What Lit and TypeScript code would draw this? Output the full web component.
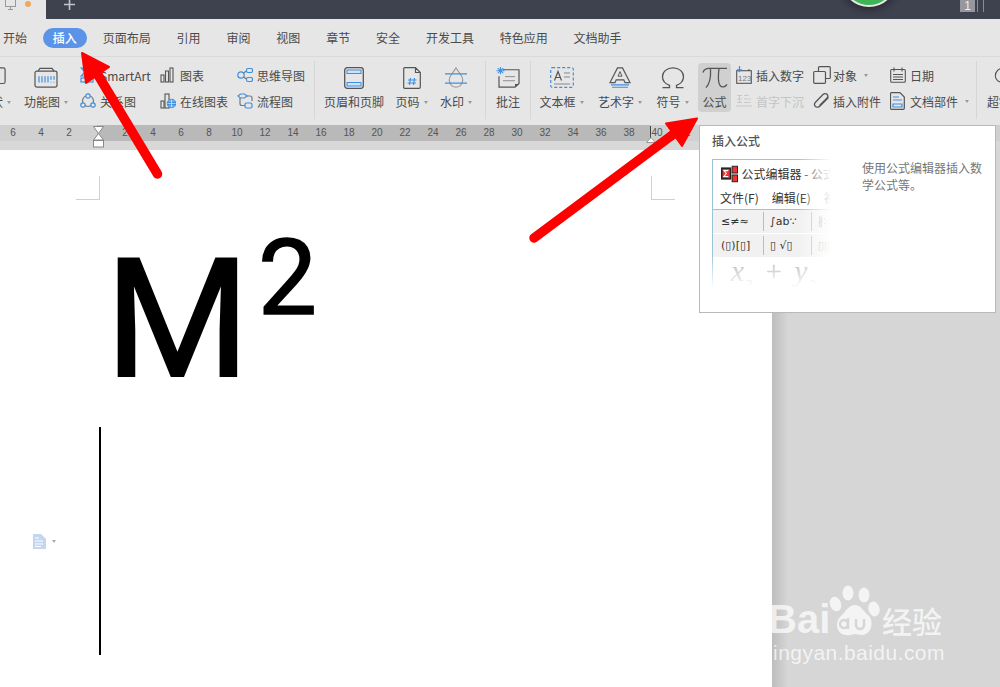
import { LitElement, html, css } from "lit";
import { customElement } from "lit/decorators.js";

const B = "#3f8fe0";
const D = "#555";

const I = {
  shape: html`<svg width="24" height="24" viewBox="0 0 24 24" fill="none"><rect x="3" y="1" width="20" height="17" rx="2" stroke="${D}" stroke-width="1.3"/></svg>`,
  func: html`<svg width="24" height="24" viewBox="0 0 24 24" preserveAspectRatio="none" fill="none" stroke="${D}" stroke-width="1.2"><path d="M4 4.5 6 1.5H18L20 4.5"/><rect x="1" y="4.5" width="22" height="17.5" rx="2"/><path d="M5 10v7M8 10v7M11 10v7M14 10v7M17 10v4M20 10v4" stroke="${B}"/><path d="M17 16v1M20 16v1" stroke="${B}"/></svg>`,
  smart: html`<svg width="16" height="16" viewBox="0 0 16 16" fill="none" stroke="${B}" stroke-width="1.2"><path d="M1 1h6l4 4-4 4H1l4-4z"/><rect x="1" y="11" width="12" height="4"/></svg>`,
  rel: html`<svg width="16" height="16" viewBox="0 0 16 16" fill="none" stroke="${B}" stroke-width="1.2"><circle cx="8" cy="8" r="5.5" stroke="#777"/><circle cx="8" cy="3" r="2.2" fill="#e6e6e6"/><circle cx="3" cy="12" r="2.2" fill="#e6e6e6"/><circle cx="13" cy="12" r="2.2" fill="#e6e6e6"/></svg>`,
  chart: html`<svg width="14" height="16" viewBox="0 0 14 16" fill="none" stroke="${D}" stroke-width="1.1"><rect x="1" y="8" width="3" height="7"/><rect x="5.5" y="4" width="3" height="11"/><rect x="10" y="1" width="3" height="14"/></svg>`,
  online: html`<svg width="16" height="16" viewBox="0 0 16 16" fill="none" stroke="${D}" stroke-width="1.1"><rect x="1" y="8" width="3" height="7"/><rect x="5" y="1" width="4" height="14"/><circle cx="11.5" cy="10.5" r="4.2" fill="${B}" stroke="${B}"/><path d="M7.5 10.5h8M11.5 6.5v8M8.5 8h6M8.5 13h6" stroke="#e6e6e6" stroke-width=".7"/></svg>`,
  mind: html`<svg width="16" height="16" viewBox="0 0 16 16" fill="none" stroke="${B}" stroke-width="1.2"><circle cx="4" cy="8" r="3.2"/><rect x="9.5" y="1.5" width="6" height="4" rx="1.5"/><rect x="9.5" y="10.5" width="6" height="4" rx="1.5"/><path d="M6.5 6 9.5 4M6.5 10l3 2" stroke="#777"/></svg>`,
  flow: html`<svg width="16" height="16" viewBox="0 0 16 16" fill="none" stroke="${B}" stroke-width="1.2"><path d="M1 3l2.5-2h4L10 3 7.5 5h-4z"/><rect x="8" y="10" width="7" height="5" rx="1.5"/><path d="M3 5v5.500q0 2 2 2h3M10 3h3q2 0 2 2v3" stroke="#777"/></svg>`,
  header: html`<svg width="20" height="22" viewBox="0 0 20 22" fill="none"><rect x=".7" y=".7" width="18.6" height="20.6" rx="2.5" stroke="${D}" stroke-width="1.3"/><rect x="3" y="3" width="14" height="3.5" fill="#cfe1f5" stroke="${B}"/><rect x="3" y="15.5" width="14" height="3.5" fill="#cfe1f5" stroke="${B}"/></svg>`,
  page: html`<svg width="18" height="22" viewBox="0 0 18 22" fill="none"><path d="M1.7.7H12.500L17.300 5.500V20a1.300 1.300 0 0 1-1.300 1.300H1.700A1 1 0 0 1 .7 20V1.700A1 1 0 0 1 1.700.7ZM12.500.7V5.500H17.300" stroke="${D}" stroke-width="1.2"/><path d="M7.500 11 6.500 18M11.500 11l-1 7M5 13h8.500M4.500 16h8.500" stroke="${B}" stroke-width="1.2"/></svg>`,
  water: html`<svg width="24" height="24" viewBox="0 0 24 24" preserveAspectRatio="none" fill="none"><path d="M12 1 17 9C20.500 14 18 22 12 22S3.500 14 7 9Z" stroke="#999" stroke-width="1.2"/><path d="M1 7.500h22M1 17.500h22" stroke="${B}" stroke-width="1.3"/></svg>`,
  note: html`<svg width="24" height="24" viewBox="0 0 24 24" preserveAspectRatio="none" fill="none"><path d="M7 3H23V18L19 22H3V10" stroke="${D}" stroke-width="1.2"/><path d="M9 10.500h10M7 15h12" stroke="#888"/><path d="M19 22V18.500H23Z" fill="${D}"/><path d="M4.500 0v8M.5 4h8M1.700 1.200l5.600 5.600M7.300 1.200 1.700 6.800" stroke="${B}" stroke-width="1.1"/></svg>`,
  tbox: html`<svg width="24" height="22" viewBox="0 0 24 22" fill="none"><rect x=".7" y=".7" width="22.6" height="19.6" rx="1.5" stroke="${B}" stroke-width="1.2" stroke-dasharray="3 2"/><path d="M4.500 13.500 8 4.500 11.500 13.500M5.800 10.500h4.500" stroke="${D}" stroke-width="1.2"/><path d="M14 6h6M14 10h6M4 17h16" stroke="#888"/></svg>`,
  art: html`<svg width="22" height="24" viewBox="0 0 22 24" preserveAspectRatio="none" fill="none"><path d="M8.500 1h5L21 17h-5l-1.200-3H7.200L6 17H1Z" stroke="${D}" stroke-width="1.2"/><path d="M9 10h4L11 5Z" stroke="${D}"/><path d="M2 19.500h18M3 22h16" stroke="${B}" stroke-width="1.1"/></svg>`,
  omega: html`<svg width="24" height="24" viewBox="0 0 24 24" preserveAspectRatio="none" fill="none"><path d="M1.500 22.500h7v-2.500C4 18 1.500 14.500 1.500 10.500 1.500 5 6 1 12 1s10.500 4 10.500 9.500c0 4-2.500 7.500-7 9.500v2.500h7" stroke="${D}" stroke-width="1.3"/></svg>`,
  pi: html`<svg width="26" height="24" viewBox="0 0 26 24" preserveAspectRatio="none" fill="none"><path d="M1 6C2 2.500 4 1.500 7 1.500H25M8.500 1.500C9 10 8 18 4 22.500M17 1.500C16 10 16 17 18 20c1.500 2.500 5 2.500 7-1" stroke="${D}" stroke-width="1.3"/></svg>`,
  num: html`<svg width="16" height="18" viewBox="0 0 16 18" fill="none"><rect x=".7" y="4.7" width="14.6" height="12.6" stroke="${D}" stroke-width="1.1"/><path d="M3 4.700V3M13 4.700V3" stroke="${D}"/><text x="2" y="14.500" font-size="8" fill="#777" font-family="Liberation Sans">123</text><path d="M3.500 0v5M1.500 3l2 2.500L5.500 3" stroke="${B}" stroke-width="1.2"/></svg>`,
  drop: html`<svg width="16" height="16" viewBox="0 0 16 16" fill="none" stroke="#c9c9c9"><path d="M1 2.500h5M1 6h5M1 9.500h5M3.500 2v8M8 2.500l4.500 0M8 6h7M8 9.500h7M0 13h16"/></svg>`,
  obj: html`<svg width="18" height="18" viewBox="0 0 18 18" fill="none" stroke="${D}" stroke-width="1.2"><rect x="5.500" y=".7" width="11.8" height="11.8" rx="1"/><rect x=".7" y="5.500" width="11.8" height="11.8" rx="1" fill="#e6e6e6"/></svg>`,
  clip: html`<svg width="18" height="18" viewBox="0 0 18 18" fill="none" stroke="${D}" stroke-width="1.3"><path d="M15.500 5.500 7 14c-1.500 1.500-3.700 1.500-4.700.4s-1-3 .4-4.400L10 2.500c1.200-1.200 3-1.200 4-.2s1 2.800-.2 4L6.500 13.500"/></svg>`,
  date: html`<svg width="16" height="16" viewBox="0 0 16 16" fill="none" stroke="${D}" stroke-width="1.1"><rect x=".7" y="2.5" width="14.6" height="12.8" rx="1"/><path d="M4 .5v4M12 .5v4M3 7.500h10M3 10h10M3 12.500h10"/></svg>`,
  part: html`<svg width="15" height="18" viewBox="0 0 15 18" fill="none"><path d="M1.500.7H10L14.300 5V16.300a1 1 0 0 1-1 1H1.500a1 1 0 0 1-1-1V1.700a1 1 0 0 1 1-1Z" stroke="${D}" stroke-width="1.2"/><path d="M3 5h6M3 8h9M3 12h9V15H3Z" stroke="${B}" stroke-width="1.2"/></svg>`,
  link: html`<svg width="24" height="24" viewBox="0 0 24 24" fill="none"><path d="M10 20 7 16.500C3 15 1.500 12.500 1.500 9.500 1.500 5 5 1.500 10 1.500s8.500 3.500 8.500 8" stroke="${D}" stroke-width="1.2"/></svg>`,
};

type Item =
  | { t: "l"; w: number; icon: unknown; label: string; caret?: boolean; ml?: number; hl?: boolean }
  | { t: "s"; w: number; pl: number; rows: { icon: unknown; iw: number; text: string; caret?: boolean; off?: boolean }[] }
  | { t: "sep"; ml?: number };

const ITEMS: Item[] = [
  { t: "l", w: 38, icon: I.shape, label: "形状", caret: true, ml: -24 },
  { t: "l", w: 64, icon: I.func, label: "功能图", caret: true },
  { t: "s", w: 80, pl: 2, rows: [{ icon: I.smart, iw: 20, text: "SmartArt" }, { icon: I.rel, iw: 20, text: "关系图" }] },
  { t: "s", w: 77, pl: 2, rows: [{ icon: I.chart, iw: 20, text: "图表" }, { icon: I.online, iw: 20, text: "在线图表" }] },
  { t: "s", w: 79, pl: 2, rows: [{ icon: I.mind, iw: 20, text: "思维导图" }, { icon: I.flow, iw: 20, text: "流程图" }] },
  { t: "sep" },
  { t: "l", w: 78, icon: I.header, label: "页眉和页脚" },
  { t: "l", w: 37, icon: I.page, label: "页码", caret: true },
  { t: "l", w: 52, icon: I.water, label: "水印", caret: true },
  { t: "sep", ml: 3 },
  { t: "l", w: 44, icon: I.note, label: "批注" },
  { t: "sep" },
  { t: "l", w: 61, icon: I.tbox, label: "文本框", caret: true },
  { t: "l", w: 56, icon: I.art, label: "艺术字", caret: true },
  { t: "l", w: 49, icon: I.omega, label: "符号", caret: true },
  { t: "l", w: 33, icon: I.pi, label: "公式", hl: true, ml: 1 },
  { t: "s", w: 81, pl: 5, rows: [{ icon: I.num, iw: 20, text: "插入数字" }, { icon: I.drop, iw: 20, text: "首字下沉", off: true }] },
  { t: "s", w: 78, pl: 1, rows: [{ icon: I.obj, iw: 20, text: "对象", caret: true }, { icon: I.clip, iw: 20, text: "插入附件" }] },
  { t: "s", w: 86, pl: 0, rows: [{ icon: I.date, iw: 20, text: "日期" }, { icon: I.part, iw: 20, text: "文档部件", caret: true }] },
  { t: "sep" },
];

const TABS = ["开始", "插入", "页面布局", "引用", "审阅", "视图", "章节", "安全", "开发工具", "特色应用", "文档助手"];
const MID = Array.from({ length: 19 }, (_, i) => (i + 1) * 2);

@customElement("app-root")
export class AppRoot extends LitElement {
  static styles = css`
    :host { display: block; height: 100vh; font-family: "Noto Sans CJK SC", "Noto Sans", sans-serif; font-size: 12px; color: #4a4a4a; }
    .root { position: relative; display: flex; flex-direction: column; height: 100%; overflow: hidden; background: #d6d6d6; }
    svg { display: block; }

    .title { display: flex; height: 19px; flex: none; background: #3e414e; overflow: hidden; }
    .home { width: 46px; background: #e6e6e6; display: flex; gap: 9px; padding-left: 5px; box-sizing: border-box; flex: none; }
    .monitor { margin-top: -2px; }
    .dot { width: 6px; height: 6px; border-radius: 50%; background: #f0a860; margin-top: 1px; }
    .plus { margin-left: 17px; margin-top: -1px; flex: none; }
    .ball { width: 52px; height: 52px; border-radius: 50%; background: #3fb455; border: 2px solid #e8e8e8; margin-left: 765px; margin-top: -49px; box-shadow: 0 2px 8px rgba(0,0,0,.45); flex: none; }
    .one { width: 15px; height: 12px; background: #96979e; color: #eee; margin-left: 63px; font: 12px/12px "Liberation Sans", sans-serif; text-align: center; flex: none; }
    .bars { width: 5px; height: 12px; margin-left: 2px; border-left: 1px solid #8a8b92; border-right: 1px solid #8a8b92; flex: none; }

    .tabs { display: flex; flex: none; gap: 25.85px; height: 38px; padding-left: 3px; box-sizing: border-box; background: #e6e6e6; border-bottom: 1px solid #dadada; align-items: center; line-height: 20px; padding-top: 1px; }
    .tab.on { background: #5b93e8; color: #fff; border-radius: 10px; padding: 0 10px; margin: 0 -10px; font-weight: 500; }

    .ribbon { display: flex; flex: none; height: 68px; padding-top: 5px; box-sizing: border-box; background: #e6e6e6; white-space: nowrap; }
    .large { flex: none; display: flex; flex-direction: column; align-items: center; }
    .slot { height: 26px; }
    .slot svg { margin-top: 5px; max-height: 22px; }
    .label { height: 26px; line-height: 26px; display: flex; align-items: center; gap: 3px; margin-top: 1px; }
    .caret { width: 0; height: 0; border: 2.5px solid transparent; border-top: 3px solid #999; border-bottom: 0; margin-left: 1px; }
    .hl { background: #d0d0d0; border-radius: 4px; margin-top: 1px; height: 49px; }
    .hl .slot { height: 25px; }
    .hl .slot svg { margin-top: 4px; }
    .small { flex: none; box-sizing: border-box; }
    .row { height: 26px; display: flex; align-items: center; }
    .ico { flex: none; }
    .row.off { color: #c4c4c4; }
    .row .caret { margin-left: 7px; }
    .sep { flex: none; width: 1px; height: 58px; margin-top: -1px; background: #d6d6d6; }
    .last { display: flex; flex-direction: column; padding-left: 10px; width: 60px; flex: none; }
    .last .slot svg { margin-left: 6px; }

    .ruler { position: relative; display: flex; flex: none; height: 25px; background: #d8d8d8; font: 10px/16px "Liberation Sans", sans-serif; color: #555; }
    .seg { height: 16px; display: flex; flex: none; }
    .seg span { width: 28px; text-align: center; flex: none; }
    .seg-l { width: 97px; background: #d0d0d0; justify-content: flex-end; padding-right: 14px; box-sizing: border-box; }
    .seg-m { width: 553px; background: #b9b9b9; padding-left: 14px; box-sizing: border-box; overflow: hidden; }
    .seg-r { flex: 1; background: #d0d0d0; padding-left: 0; }
    .seg-r span { margin-left: -7px; }
    .seg-r span + span { margin-left: 0; }
    .marker { position: absolute; top: 1px; left: 92px; }
    .marker-r { position: absolute; top: 1px; left: 645px; }

    .work { display: flex; flex: 1; min-height: 0; }
    .page { width: 772px; flex: none; background: #fff; }
    .side { flex: 1; background: linear-gradient(90deg, #bdbdbd, #d6d6d6 16px); }
    .marks { display: flex; justify-content: space-between; width: 599px; margin-left: 76px; padding-top: 26px; }
    .mark { width: 24px; height: 24px; box-sizing: border-box; border-bottom: 1px solid #d0d0d0; }
    .mark.a { border-right: 1px solid #d0d0d0; }
    .mark.b { border-left: 1px solid #d0d0d0; }
    .eq { margin: 36px 0 0 105px; height: 167px; font: 400 166px/167px Roboto, sans-serif; color: #000; white-space: nowrap; -webkit-text-stroke: 2px #000; }
    .eq sup { font-size: 105px; line-height: 0; vertical-align: 62px; margin-left: 8px; -webkit-text-stroke: 1.5px #000; }
    .line { display: flex; align-items: center; height: 228px; margin: 24px 0 0 33px; }
    .line .caret { margin-left: 6px; border-top-color: #aaa; }
    .bar { width: 2px; height: 228px; background: #000; margin-left: 43px; }

    .tip { position: absolute; left: 699px; top: 125px; width: 297px; height: 188px; box-sizing: border-box; background: #fff; border: 1px solid #b9b9b9; display: grid; grid-template-columns: 123px 1fr; column-gap: 27px; grid-template-rows: auto 1fr; padding: 6px 10px 0 12px; }
    .tip h4 { grid-column: 1 / 3; margin: 0 0 10px; font-size: 12px; line-height: 17px; font-weight: 500; color: #555; }
    .desc { color: #777; line-height: 17px; font-size: 12px; }
    .shot { position: relative; width: 123px; height: 132px; overflow: hidden; color: #333; white-space: nowrap; }
    .inner { height: 132px; box-sizing: border-box; border-top: 1px solid #9cc3d8; border-left: 1px solid #9cc3d8; }
    .shot::after { content: ""; position: absolute; inset: 0; background: linear-gradient(90deg, transparent 70%, #fff 97%), linear-gradient(180deg, transparent 72%, #fff 98%); }
    .st { display: flex; align-items: center; height: 27px; padding-left: 8px; gap: 3px; }
    .sm { display: flex; gap: 13px; height: 22px; line-height: 22px; padding-left: 7px; border-bottom: 1px solid #bbb; box-sizing: content-box; }
    .tb { display: flex; align-items: center; height: 23px; background: #f1f1f1; margin-bottom: 1px; font: 11px/23px "DejaVu Sans", sans-serif; padding-left: 8px; }
    .tb span { width: 42px; flex: none; border-right: 1px solid #bbb; height: 19px; line-height: 19px; overflow: hidden; }
    .tb span + span { padding-left: 6px; box-sizing: border-box; width: 48px; }
    .tb span:last-child { border: 0; color: #999; }
    .mt { font: italic 29px/26px "Liberation Serif", serif; color: #aaa; padding-left: 18px; letter-spacing: 2px; }
    .mt sub { font-size: 13px; line-height: 0; font-style: normal; }

    .wm { position: absolute; left: 768px; top: 580px; width: 180px; color: rgba(255,255,255,.72); pointer-events: none; }
    .wm-top { display: flex; align-items: flex-end; height: 57px; }
    .wm-bai { font: 700 40px/36px "Liberation Sans", sans-serif; width: 62px; }
    .wm-cn { font-size: 30px; line-height: 34px; margin-left: 1px; font-weight: 500; }
    .wm-url { font: 21px/24px "Liberation Sans", sans-serif; letter-spacing: .45px; margin-top: 4px; white-space: nowrap; }
    .paw { flex: none; }
    .arrows { position: absolute; inset: 0; pointer-events: none; }
  `;

  private item(it: Item) {
    if (it.t === "sep") return html`<div class="sep" style="margin-left:${it.ml ?? 0}px"></div>`;
    if (it.t === "l") {
      return html`<div class="large ${it.hl ? "hl" : ""}" style="width:${it.w}px;margin-left:${it.ml ?? 0}px">
        <div class="slot">${it.icon}</div>
        <div class="label">${it.label}${it.caret ? html`<i class="caret"></i>` : ""}</div>
      </div>`;
    }
    return html`<div class="small" style="width:${it.w}px;padding-left:${it.pl}px">
      ${it.rows.map((r) => html`<div class="row ${r.off ? "off" : ""}">
        <div class="ico" style="width:${r.iw}px">${r.icon}</div><div class="t">${r.text}</div>${r.caret ? html`<i class="caret"></i>` : ""}
      </div>`)}
    </div>`;
  }

  render() {
    return html`<div class="root">
      <div class="title">
        <div class="home">
          <svg class="monitor" width="11" height="12" viewBox="0 0 11 12" fill="none" stroke="#999"><rect x=".5" y=".5" width="10" height="8"/><path d="M5.5 9v2M3 11.500h5"/></svg>
          <div class="dot"></div>
        </div>
        <svg class="plus" width="13" height="12" viewBox="0 0 13 12" fill="none" stroke="#c4c5ca" stroke-width="1.6"><path d="M6.500 0v11M1 5.500h11"/></svg>
        <div class="ball"></div>
        <div class="one">1</div>
        <div class="bars"></div>
      </div>

      <div class="tabs">${TABS.map((t) => html`<div class="tab ${t === "插入" ? "on" : ""}">${t}</div>`)}</div>

      <div class="ribbon">
        ${ITEMS.map((i) => this.item(i))}
        <div class="last"><div class="slot">${I.link}</div><div class="label">超链接</div></div>
      </div>

      <div class="ruler">
        <div class="seg seg-l"><span>6</span><span>4</span><span>2</span></div>
        <div class="seg seg-m">${MID.map((n) => html`<span>${n}</span>`)}</div>
        <div class="seg seg-r"><span>40</span><span>42</span></div>
        <svg class="marker" width="13" height="22" viewBox="0 0 13 22" fill="#fff" stroke="#888"><path d="M1.500.5h10L6.500 7.500Z"/><path d="M6.500 7.500l5 6.500h-10Z"/><rect x="1.5" y="14.5" width="10" height="6.5"/></svg>
        <svg class="marker-r" width="13" height="17" viewBox="0 0 13 17" fill="#fff"><path d="M5.500 0v15" stroke="#444"/><path d="M1.500 16.500 6 11.500l4.500 5Z" stroke="#999"/></svg>
      </div>

      <div class="work">
        <div class="page">
          <div class="marks"><div class="mark a"></div><div class="mark b"></div></div>
          <div class="eq">M<sup>2</sup></div>
          <div class="line">
            <svg width="13" height="15" viewBox="0 0 13 15"><path d="M0 0H8L13 5V15H0Z" fill="#c3d5f0"/><path d="M2 4h4M2 7h8M2 10h8M2 12.500h6" stroke="#fff"/></svg>
            <i class="caret"></i>
            <div class="bar"></div>
          </div>
        </div>
        <div class="side"></div>
      </div>

      <div class="wm">
        <div class="wm-top">
          <div class="wm-bai">Bai</div>
          <svg class="paw" width="52" height="54" viewBox="0 0 52 54" fill="currentColor" style="margin-left:-1px">
            <ellipse cx="19" cy="10" rx="5.5" ry="7.5"/><ellipse cx="35" cy="12" rx="5.5" ry="7.5"/>
            <ellipse cx="6.500" cy="21" rx="5.5" ry="7.5" transform="rotate(-20 6.500 21)"/><ellipse cx="45" cy="26" rx="5.5" ry="7.5" transform="rotate(-15 45 26)"/>
            <path d="M26 22c6 0 8 6 13 10 6 5 5 19-6 20-3 0-5-1-7-1s-5 2-9 1C7 51 6 39 11 34c5-4 8-12 15-12Z"/>
            <path d="M19 35v11M19 41a4 4 0 1 0 0 .1M27 36v6a4 4 0 0 0 8 0v-6" fill="none" stroke="#d6d6d6" stroke-width="2.5"/>
          </svg>
          <div class="wm-cn">经验</div>
        </div>
        <div class="wm-url">jingyan.baidu.com</div>
      </div>

      <div class="tip">
        <h4>插入公式</h4>
        <div class="shot">
          <div class="inner">
            <div class="st">
              <svg width="18" height="18" viewBox="0 0 18 18"><rect x=".8" y="3" width="9" height="11" fill="#e33" stroke="#222" stroke-width="1.6"/><path d="M7.500 5.500H3l2.500 3-2.500 3h4.500" fill="none" stroke="#fff" stroke-width="1.1"/><rect x="11.500" y="1" width="5.5" height="7" fill="#e33" stroke="#222"/><rect x="11.500" y="10" width="5.5" height="7" fill="#e33" stroke="#222"/></svg>
              <span>公式编辑器 - 公式</span>
            </div>
            <div class="sm"><span>文件(F)</span><span>编辑(E)</span><span>视图</span></div>
            <div class="tb"><span>≤≠≈</span><span>∫ab∵</span><span>∦∷</span></div>
            <div class="tb"><span>(▯)[▯]</span><span>▯ √▯</span><span>▯▯</span></div>
            <div class="mt">x<sub>2</sub> + y<sub>2</sub></div>
          </div>
        </div>
        <div class="desc">使用公式编辑器插入数学公式等。</div>
      </div>

      <svg class="arrows" viewBox="0 0 1000 687" width="1000" height="687">
        <g fill="#f00" stroke="#f00" stroke-linejoin="round">
          <path d="M82 53 109 67 86 83Z" stroke-width="2"/>
          <path d="M98 75 157.500 174" stroke-width="9.5" stroke-linecap="round" fill="none"/>
          <path d="M697 118.500 666 123.500 682 146Z" stroke-width="2"/>
          <path d="M534 238 675 133" stroke-width="9.5" stroke-linecap="round" fill="none"/>
        </g>
      </svg>
    </div>`;
  }
}
